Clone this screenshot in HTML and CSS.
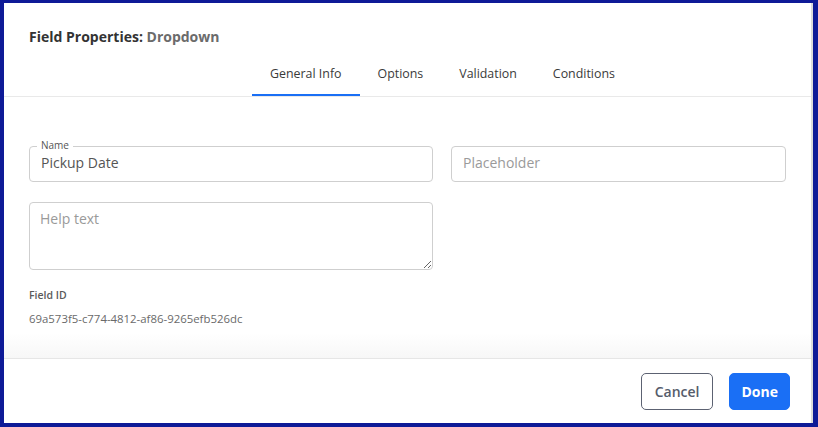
FILE: index.html
```html
<!DOCTYPE html>
<html lang="en">
<head>
    <meta charset="UTF-8">
    <meta name="viewport" content="width=device-width, initial-scale=1.0">
    <title>Field Properties</title>
    <link rel="stylesheet" href="styles.css">
</head>
<body>
    <div class="dialog">
        <div class="dialog-header">
            <h2 class="title">Field Properties: <span class="title-type">Dropdown</span></h2>
            <div class="tabs">
                <span class="tab active">General Info</span>
                <span class="tab">Options</span>
                <span class="tab">Validation</span>
                <span class="tab">Conditions</span>
            </div>
        </div>

        <div class="dialog-body">
            <div class="form-grid">
                <div class="field">
                    <label class="field-label" for="name">Name</label>
                    <input type="text" id="name" class="text-input" value="Pickup Date">
                </div>
                <div class="field">
                    <input type="text" class="text-input" placeholder="Placeholder">
                </div>
                <div class="field">
                    <textarea class="text-input text-area" placeholder="Help text"></textarea>
                </div>
            </div>

            <div class="field-id">
                <div class="field-id-label">Field ID</div>
                <div class="field-id-value">69a573f5-c774-4812-af86-9265efb526dc</div>
            </div>
        </div>

        <div class="dialog-footer">
            <button class="btn btn-cancel">Cancel</button>
            <button class="btn btn-done">Done</button>
        </div>
    </div>
</body>
</html>
```

FILE: styles.css
```css
html, body {
    margin: 0;
    padding: 0;
}
body {
    font-family: "Open Sans", "Liberation Sans", sans-serif;
    background-color: #0e1a97;
    height: 427px;
    overflow: hidden;
}
.dialog {
    margin: 3px 5px 0 4px;
    height: 420px;
    background-color: #fff;
    border-right: 2px solid #dcdcdc;
    display: flex;
    flex-direction: column;
}
.dialog-header {
    padding: 24px 25px 0;
    border-bottom: 1px solid #e9e9e9;
}
.title {
    margin: 0;
    font-size: 14px;
    line-height: 20px;
    font-weight: 700;
    color: #333;
}
.title-type {
    color: #6b6b6b;
}
.tabs {
    display: flex;
    margin-left: 223px;
}
.tab {
    padding: 18px 18px 11px;
    font-size: 12.4px;
    line-height: 18px;
    color: #3a3a3a;
    border-bottom: 2px solid transparent;
    cursor: pointer;
}
.tab.active {
    border-bottom-color: #1a6ff5;
}
.dialog-body {
    flex: 1;
    padding: 49px 26px 0 25px;
    background: linear-gradient(to bottom, #fff 0, #fff 236px, #f7f7f7 100%);
}
.form-grid {
    display: grid;
    grid-template-columns: 404px 335px;
    column-gap: 18px;
    row-gap: 20px;
}
.field {
    position: relative;
}
.field-label {
    position: absolute;
    top: -7px;
    left: 8px;
    padding: 0 4px;
    background: #fff;
    font-size: 10px;
    line-height: 12px;
    color: #555;
}
.text-input {
    box-sizing: border-box;
    width: 100%;
    height: 36px;
    padding: 0 11px 3px;
    border: 1px solid #cfcfcf;
    border-radius: 4px;
    font-family: inherit;
    font-size: 14px;
    color: #555;
    background: #fff;
    outline: none;
}
.text-input::placeholder {
    color: #9a9a9a;
}
.text-area {
    display: block;
    height: 68px;
    padding: 6px 10px;
    line-height: 20px;
    resize: vertical;
}
.field-id {
    margin-top: 17px;
}
.field-id-label {
    font-size: 10.5px;
    line-height: 16px;
    font-weight: 600;
    color: #5a5a5a;
}
.field-id-value {
    margin-top: 8px;
    font-size: 11.4px;
    line-height: 16px;
    color: #6a6a6a;
}
.dialog-footer {
    display: flex;
    justify-content: flex-end;
    gap: 16px;
    height: 65px;
    box-sizing: border-box;
    padding: 14px 21px 0 0;
    border-top: 1px solid #e6e6e6;
}
.btn {
    height: 37px;
    padding: 0 13px;
    border-radius: 5px;
    font-family: inherit;
    font-size: 14px;
    font-weight: 600;
    cursor: pointer;
}
.btn-cancel {
    background: #fff;
    border: 1px solid #5c6272;
    color: #555c6b;
}
.btn-done {
    background: #1a6ff5;
    border: 1px solid #1a6ff5;
    color: #fff;
    font-weight: 700;
    padding: 0 11px;
}
```
